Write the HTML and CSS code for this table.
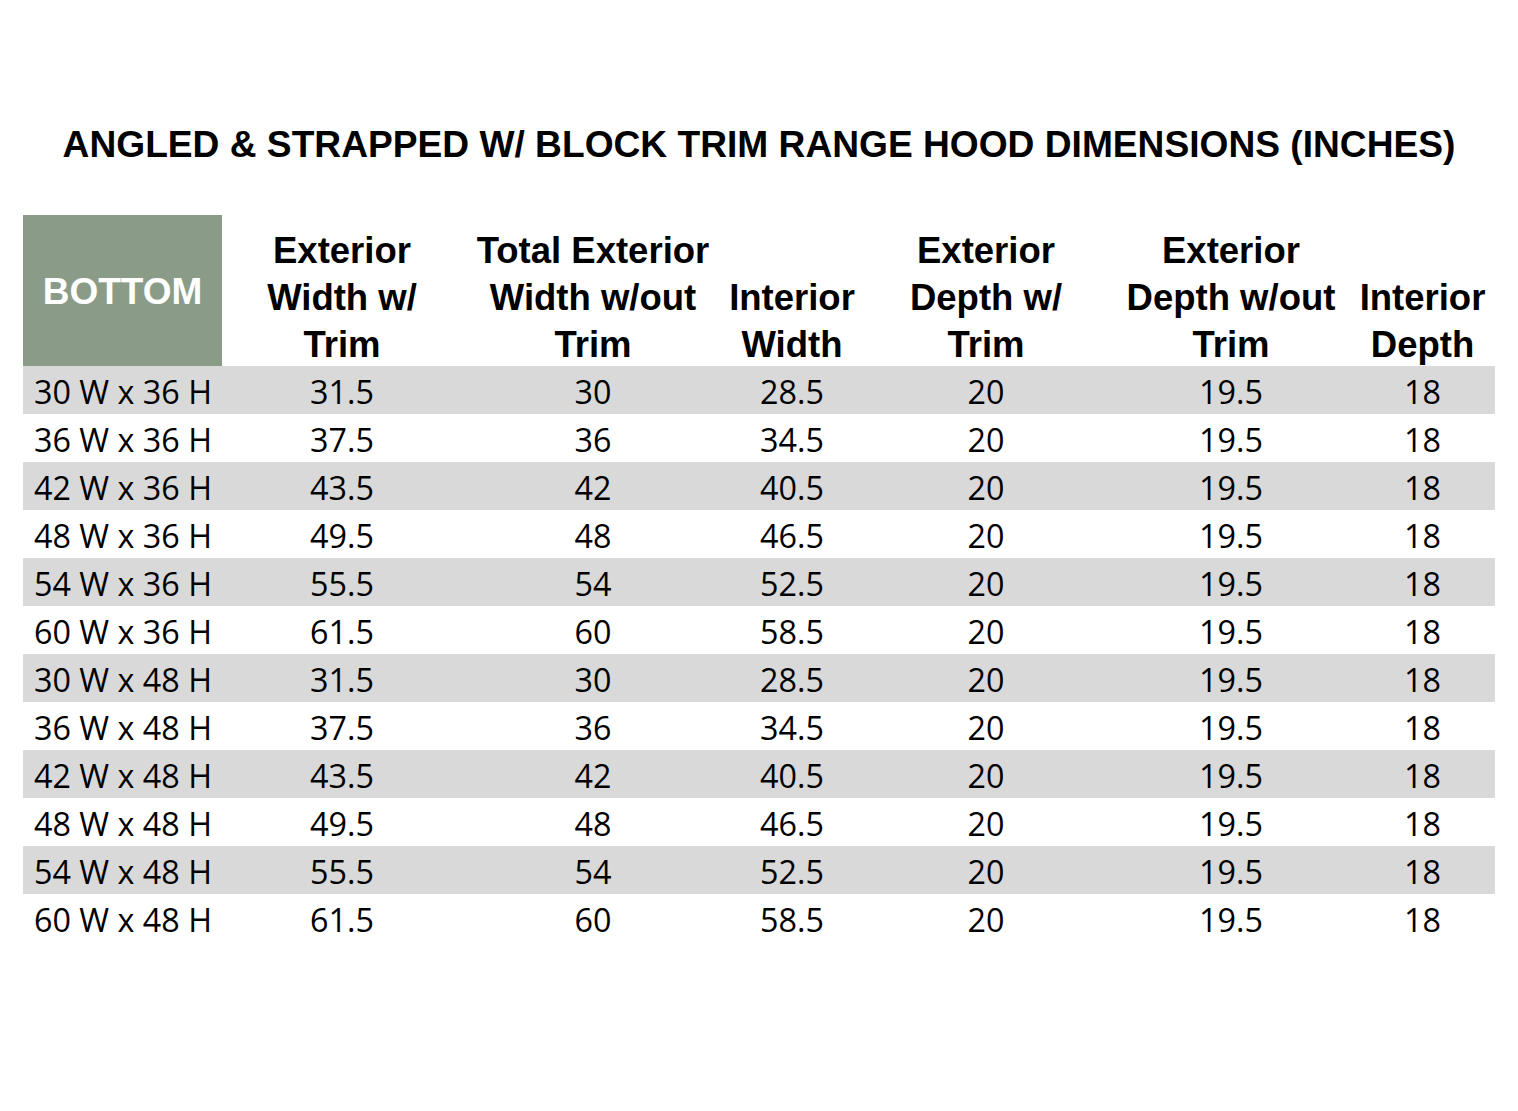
FILE: index.html
```html
<!DOCTYPE html>
<html lang="en">
<head>
<meta charset="utf-8">
<title>Range Hood Dimensions</title>
<link rel="stylesheet" href="styles.css">
</head>
<body>
<h1 class="title">ANGLED &amp; STRAPPED W/ BLOCK TRIM RANGE HOOD DIMENSIONS (INCHES)</h1>
<div class="table">
  <div class="head corner"><span>BOTTOM</span></div>
  <div class="head"><span>Exterior<br>Width w/<br>Trim</span></div>
  <div class="head"><span>Total Exterior<br>Width w/out<br>Trim</span></div>
  <div class="head"><span>Interior<br>Width</span></div>
  <div class="head"><span>Exterior<br>Depth w/<br>Trim</span></div>
  <div class="head"><span>Exterior<br>Depth w/out<br>Trim</span></div>
  <div class="head"><span>Interior<br>Depth</span></div>

  <div class="row shade"><div class="c first">30 W x 36 H</div><div class="c">31.5</div><div class="c">30</div><div class="c">28.5</div><div class="c">20</div><div class="c">19.5</div><div class="c">18</div></div>
  <div class="row"><div class="c first">36 W x 36 H</div><div class="c">37.5</div><div class="c">36</div><div class="c">34.5</div><div class="c">20</div><div class="c">19.5</div><div class="c">18</div></div>
  <div class="row shade"><div class="c first">42 W x 36 H</div><div class="c">43.5</div><div class="c">42</div><div class="c">40.5</div><div class="c">20</div><div class="c">19.5</div><div class="c">18</div></div>
  <div class="row"><div class="c first">48 W x 36 H</div><div class="c">49.5</div><div class="c">48</div><div class="c">46.5</div><div class="c">20</div><div class="c">19.5</div><div class="c">18</div></div>
  <div class="row shade"><div class="c first">54 W x 36 H</div><div class="c">55.5</div><div class="c">54</div><div class="c">52.5</div><div class="c">20</div><div class="c">19.5</div><div class="c">18</div></div>
  <div class="row"><div class="c first">60 W x 36 H</div><div class="c">61.5</div><div class="c">60</div><div class="c">58.5</div><div class="c">20</div><div class="c">19.5</div><div class="c">18</div></div>
  <div class="row shade"><div class="c first">30 W x 48 H</div><div class="c">31.5</div><div class="c">30</div><div class="c">28.5</div><div class="c">20</div><div class="c">19.5</div><div class="c">18</div></div>
  <div class="row"><div class="c first">36 W x 48 H</div><div class="c">37.5</div><div class="c">36</div><div class="c">34.5</div><div class="c">20</div><div class="c">19.5</div><div class="c">18</div></div>
  <div class="row shade"><div class="c first">42 W x 48 H</div><div class="c">43.5</div><div class="c">42</div><div class="c">40.5</div><div class="c">20</div><div class="c">19.5</div><div class="c">18</div></div>
  <div class="row"><div class="c first">48 W x 48 H</div><div class="c">49.5</div><div class="c">48</div><div class="c">46.5</div><div class="c">20</div><div class="c">19.5</div><div class="c">18</div></div>
  <div class="row shade"><div class="c first">54 W x 48 H</div><div class="c">55.5</div><div class="c">54</div><div class="c">52.5</div><div class="c">20</div><div class="c">19.5</div><div class="c">18</div></div>
  <div class="row"><div class="c first">60 W x 48 H</div><div class="c">61.5</div><div class="c">60</div><div class="c">58.5</div><div class="c">20</div><div class="c">19.5</div><div class="c">18</div></div>
</div>
</body>
</html>
```
FILE: styles.css
```css
html, body {
  margin: 0;
  padding: 0;
  background: #ffffff;
  color: #000000;
}
body {
  width: 1518px;
  min-height: 1111px;
}
.title {
  margin: 0;
  padding-top: 122px;
  font-family: "Liberation Sans", Arial, sans-serif;
  font-weight: bold;
  font-size: 37.15px;
  line-height: 44px;
  text-align: center;
}
.table {
  margin: 49px 0 0 23px;
  width: 1472px;
  display: grid;
  grid-template-columns: 199px 240px 262px 136px 252px 238px 145px;
}
.head {
  height: 151px;
  display: flex;
  align-items: flex-end;
  justify-content: center;
  text-align: center;
  font-family: "Liberation Sans", Arial, sans-serif;
  font-weight: bold;
  font-size: 36.5px;
  line-height: 47px;
  white-space: nowrap;
}
.head span {
  margin-bottom: -2px;
}
.head.corner {
  background: #8a9b87;
  color: #ffffff;
  align-items: center;
  font-size: 37px;
}
.head.corner span {
  margin-bottom: 0;
  margin-top: 2px;
}
.row {
  display: contents;
}
.c {
  box-sizing: border-box;
  height: 48px;
  padding-top: 2px;
  font-family: "Open Sans", "Noto Sans", sans-serif;
  font-size: 32.3px;
  line-height: 46px;
  text-align: center;
  white-space: nowrap;
}
.c.first {
  text-align: left;
  padding-left: 11px;
}
.row.shade .c {
  background: #d9d9d9;
}
```
